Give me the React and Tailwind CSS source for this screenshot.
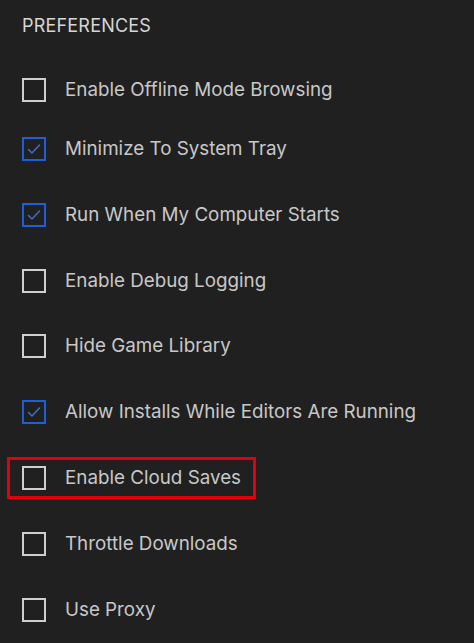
import React from "react";

const items = [
  { label: "Enable Offline Mode Browsing", checked: false, mt: "mt-[42px]" },
  { label: "Minimize To System Tray", checked: true, mt: "mt-[35px]" },
  { label: "Run When My Computer Starts", checked: true, mt: "mt-[42px]" },
  { label: "Enable Debug Logging", checked: false, mt: "mt-[42px]" },
  { label: "Hide Game Library", checked: false, mt: "mt-[41px]" },
  { label: "Allow Installs While Editors Are Running", checked: true, mt: "mt-[42px]" },
  { label: "Enable Cloud Saves", checked: false, mt: "mt-[33px]", highlight: true },
  { label: "Throttle Downloads", checked: false, mt: "mt-[33px]" },
  { label: "Use Proxy", checked: false, mt: "mt-[42px]" },
];

function Box({ checked }) {
  if (checked) {
    return (
      <div className="w-[24px] h-[24px] shrink-0 border-[2.5px] border-[#1f5fd6] flex items-center justify-center">
        <svg width="16" height="16" viewBox="0 0 16 16" fill="none">
          <path d="M2.5 8.5 L6 12 L13.5 4" stroke="#3f6cc2" strokeWidth="1.6" strokeLinecap="round" strokeLinejoin="round" />
        </svg>
      </div>
    );
  }
  return <div className="w-[24px] h-[24px] shrink-0 border-[2.5px] border-[#cfcfcf]" />;
}

export default function App() {
  return (
    <div
      className="w-[474px] h-[643px] bg-[#202020] pl-[22px] pt-[16px] overflow-hidden"
      style={{ fontFamily: "Inter, 'Noto Sans', sans-serif" }}
    >
      <div className="text-[18px] leading-[20px] text-[#d6d6d6] tracking-[0.2px]">PREFERENCES</div>
      <div className="flex flex-col">
        {items.map((it) =>
          it.highlight ? (
            <div
              key={it.label}
              className={`${it.mt} -ml-[15px] w-[249px] border-[3px] border-[#e1000f] pl-[12px] py-[6px] flex items-center gap-[19px]`}
            >
              <Box checked={it.checked} />
              <span className="text-[18.8px] leading-[24px] text-[#c8c8c8] whitespace-nowrap">{it.label}</span>
            </div>
          ) : (
            <div key={it.label} className={`${it.mt} h-[24px] flex items-center gap-[19px]`}>
              <Box checked={it.checked} />
              <span className="text-[18.8px] leading-[24px] text-[#c8c8c8] whitespace-nowrap">{it.label}</span>
            </div>
          )
        )}
      </div>
    </div>
  );
}
